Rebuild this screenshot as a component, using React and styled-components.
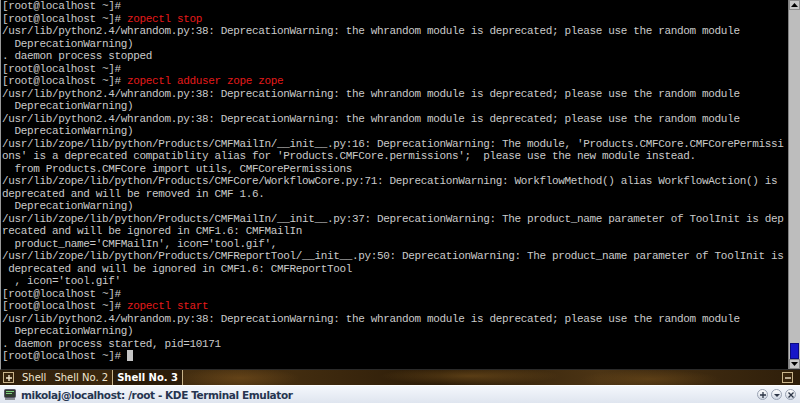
import React from "react";
import styled, { createGlobalStyle } from "styled-components";

const GlobalStyle = createGlobalStyle`
  html, body {
    margin: 0;
    padding: 0;
    background: #000;
  }
`;

const PROMPT = "[root@localhost ~]# ";

const lines = [
  { text: PROMPT.trimEnd() },
  { text: PROMPT, cmd: "zopectl stop" },
  { text: "/usr/lib/python2.4/whrandom.py:38: DeprecationWarning: the whrandom module is deprecated; please use the random module" },
  { text: "  DeprecationWarning)" },
  { text: ". daemon process stopped" },
  { text: PROMPT.trimEnd() },
  { text: PROMPT, cmd: "zopectl adduser zope zope" },
  { text: "/usr/lib/python2.4/whrandom.py:38: DeprecationWarning: the whrandom module is deprecated; please use the random module" },
  { text: "  DeprecationWarning)" },
  { text: "/usr/lib/python2.4/whrandom.py:38: DeprecationWarning: the whrandom module is deprecated; please use the random module" },
  { text: "  DeprecationWarning)" },
  { text: "/usr/lib/zope/lib/python/Products/CMFMailIn/__init__.py:16: DeprecationWarning: The module, 'Products.CMFCore.CMFCorePermissi" },
  { text: "ons' is a deprecated compatiblity alias for 'Products.CMFCore.permissions';  please use the new module instead." },
  { text: "  from Products.CMFCore import utils, CMFCorePermissions" },
  { text: "/usr/lib/zope/lib/python/Products/CMFCore/WorkflowCore.py:71: DeprecationWarning: WorkflowMethod() alias WorkflowAction() is" },
  { text: "deprecated and will be removed in CMF 1.6." },
  { text: "  DeprecationWarning)" },
  { text: "/usr/lib/zope/lib/python/Products/CMFMailIn/__init__.py:37: DeprecationWarning: The product_name parameter of ToolInit is dep" },
  { text: "recated and will be ignored in CMF1.6: CMFMailIn" },
  { text: "  product_name='CMFMailIn', icon='tool.gif'," },
  { text: "/usr/lib/zope/lib/python/Products/CMFReportTool/__init__.py:50: DeprecationWarning: The product_name parameter of ToolInit is" },
  { text: " deprecated and will be ignored in CMF1.6: CMFReportTool" },
  { text: "  , icon='tool.gif'" },
  { text: PROMPT.trimEnd() },
  { text: PROMPT, cmd: "zopectl start" },
  { text: "/usr/lib/python2.4/whrandom.py:38: DeprecationWarning: the whrandom module is deprecated; please use the random module" },
  { text: "  DeprecationWarning)" },
  { text: ". daemon process started, pid=10171" },
  { text: PROMPT, cursor: true },
];

const tabs = [
  { label: "Shell" },
  { label: "Shell No. 2" },
  { label: "Shell No. 3", active: true },
];

export default function App() {
  return (
    <>
      <GlobalStyle />
      <Window>
        <TermArea>
          <Screen>
            {lines.map((line, i) => (
              <Line key={i}>
                {line.text}
                {line.cmd && <Cmd>{line.cmd}</Cmd>}
                {line.cursor && <Cursor />}
              </Line>
            ))}
          </Screen>
          <ScrollBar>
            <ArrowBtn>
              <svg width="7" height="4" viewBox="0 0 7 4">
                <path d="M0 4 L3.5 0 L7 4 Z" fill="#000" />
              </svg>
            </ArrowBtn>
            <Track>
              <Thumb />
            </Track>
            <ArrowBtn>
              <svg width="7" height="4" viewBox="0 0 7 4">
                <path d="M0 0 L3.5 4 L7 0 Z" fill="#000" />
              </svg>
            </ArrowBtn>
          </ScrollBar>
        </TermArea>
        <TabBar>
          <TabIcon>
            <svg width="8" height="8" viewBox="0 0 8 8">
              <path d="M4 1 V7 M1 4 H7" stroke="#f2e6cc" strokeWidth="1.4" />
            </svg>
          </TabIcon>
          {tabs.map((t) => (
            <Tab key={t.label} active={t.active}>
              {t.label}
            </Tab>
          ))}
          <TabSpacer />
          <TabIcon>
            <svg width="8" height="8" viewBox="0 0 8 8">
              <path d="M1 4 H7" stroke="#f2e6cc" strokeWidth="1.4" />
            </svg>
          </TabIcon>
        </TabBar>
        <TitleBar>
          <AppIcon>
            <svg width="12" height="11" viewBox="0 0 12 11">
              <rect x="0.5" y="0.5" width="11" height="8" rx="1" fill="#2f3a2f" stroke="#556" />
              <rect x="2" y="2" width="8" height="1" fill="#7fd07f" />
              <rect x="2" y="4" width="6" height="1" fill="#7fd07f" />
              <rect x="1" y="9" width="10" height="2" fill="#8a8f96" />
            </svg>
          </AppIcon>
          <Title>mikolaj@localhost: /root - KDE Terminal Emulator</Title>
          <TitleButtons>
            <RoundBtn>
              <svg width="8" height="8" viewBox="0 0 8 8">
                <path d="M4 1 V7 M1 4 H7" stroke="#2c3546" strokeWidth="1.3" />
              </svg>
            </RoundBtn>
            <RoundBtn>
              <svg width="8" height="8" viewBox="0 0 8 8">
                <path d="M1 3 L4 6 L7 3 Z" fill="#2c3546" />
              </svg>
            </RoundBtn>
            <RoundBtn>
              <svg width="8" height="8" viewBox="0 0 8 8">
                <path d="M1.5 1.5 L6.5 6.5 M6.5 1.5 L1.5 6.5" stroke="#2c3546" strokeWidth="1.3" />
              </svg>
            </RoundBtn>
          </TitleButtons>
        </TitleBar>
      </Window>
    </>
  );
}

const Window = styled.div`
  width: 800px;
  height: 403px;
  display: flex;
  flex-direction: column;
  overflow: hidden;
  background: #000;
`;

const TermArea = styled.div`
  height: 369px;
  display: flex;
  border-left: 1px solid #9a9a9a;
  border-bottom: 1px solid #2a2a2a;
`;

const Screen = styled.div`
  flex: 1;
  background: #000;
  padding: 0 0 0 1px;
  overflow: hidden;
`;

const Line = styled.div`
  height: 12.5px;
  line-height: 12.5px;
  white-space: pre;
  font-family: "Liberation Mono", "DejaVu Sans Mono", monospace;
  font-size: 11px;
  letter-spacing: -0.35px;
  color: #cacaca;
`;

const Cmd = styled.span`
  color: #e41a1a;
`;

const Cursor = styled.span`
  display: inline-block;
  width: 6px;
  height: 11px;
  vertical-align: -2px;
  background: #c4c4c4;
`;

const ScrollBar = styled.div`
  width: 11px;
  display: flex;
  flex-direction: column;
  background: #bdbdbd;
  border-left: 1px solid #808080;
`;

const ArrowBtn = styled.div`
  height: 10px;
  display: flex;
  align-items: center;
  justify-content: center;
  background: #c8c8c8;
  border: 1px solid #8c8c8c;
  box-sizing: border-box;
`;

const Track = styled.div`
  flex: 1;
  display: flex;
  flex-direction: column;
  justify-content: flex-end;
`;

const Thumb = styled.div`
  height: 14px;
  margin: 0 1px;
  background: #1616c8;
  border: 1px solid #0a0a80;
`;

const TabBar = styled.div`
  height: 15px;
  display: flex;
  align-items: stretch;
  padding: 0 3px 0 3px;
  background:
    radial-gradient(ellipse 60px 10px at 240px 8px, rgba(120, 80, 28, 0.55), transparent),
    radial-gradient(ellipse 90px 9px at 470px 6px, rgba(130, 90, 32, 0.5), transparent),
    radial-gradient(ellipse 70px 9px at 650px 9px, rgba(115, 78, 26, 0.5), transparent),
    linear-gradient(90deg, #2e1e0a, #4a3212 30%, #2c1c08 55%, #4c3414 75%, #2e1e0a);
  font-family: "DejaVu Sans", Verdana, sans-serif;
  font-size: 10px;
  color: #f3ead8;
`;

const TabIcon = styled.div`
  width: 11px;
  height: 11px;
  margin: auto 4px auto 0;
  border: 1px solid #c9b48a;
  box-sizing: border-box;
  display: flex;
  align-items: center;
  justify-content: center;
  background: rgba(60, 40, 15, 0.6);
`;

const Tab = styled.div`
  display: flex;
  align-items: center;
  padding: 0 4px;
  font-weight: ${(p) => (p.active ? "bold" : "normal")};
  color: ${(p) => (p.active ? "#ffffff" : "#f0e6d2")};
  border-left: ${(p) => (p.active ? "1px solid #c9b48a" : "none")};
  border-right: ${(p) => (p.active ? "1px solid #c9b48a" : "none")};
  background: ${(p) => (p.active ? "rgba(20, 12, 4, 0.5)" : "transparent")};
`;

const TabSpacer = styled.div`
  flex: 1;
`;

const TitleBar = styled.div`
  flex: 1;
  display: flex;
  align-items: center;
  padding: 0 4px;
  background: linear-gradient(#f4f7fc, #dfe5ef);
  border-top: 1px solid #ffffff;
`;

const AppIcon = styled.div`
  width: 12px;
  height: 11px;
  margin-right: 5px;
  display: flex;
`;

const Title = styled.div`
  flex: 1;
  font-family: "DejaVu Sans", Verdana, sans-serif;
  font-weight: bold;
  font-size: 10.5px;
  letter-spacing: -0.4px;
  color: #263550;
  white-space: nowrap;
`;

const TitleButtons = styled.div`
  display: flex;
  gap: 3px;
`;

const RoundBtn = styled.div`
  width: 11px;
  height: 11px;
  border-radius: 50%;
  display: flex;
  align-items: center;
  justify-content: center;
  background: linear-gradient(#ffffff, #cfd6e2);
  border: 1px solid #9aa3b3;
  box-sizing: border-box;
`;
